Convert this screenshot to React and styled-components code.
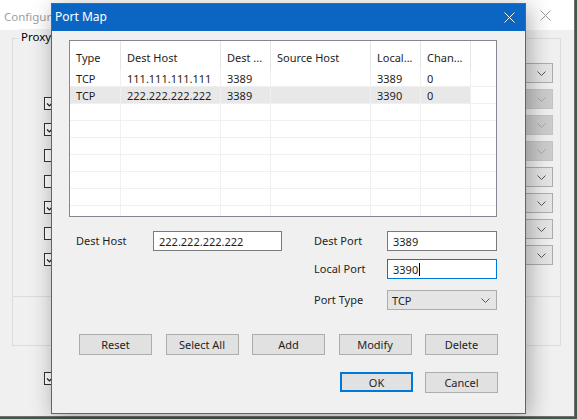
import React from 'react';
import styled, { createGlobalStyle } from 'styled-components';

const GlobalStyle = createGlobalStyle`
	html, body {
		margin: 0;
		padding: 0;
	}
	body {
		width: 577px;
		height: 419px;
		overflow: hidden;
		background: #3f5a4c;
		font-family: "Noto Sans", "Segoe UI", sans-serif;
		font-size: 11px;
		color: #000;
	}
	* {
		box-sizing: border-box;
	}
`;

const columns = [
	{ title: 'Type', width: 51 },
	{ title: 'Dest Host', width: 100 },
	{ title: 'Dest ...', width: 50 },
	{ title: 'Source Host', width: 100 },
	{ title: 'Local...', width: 50 },
	{ title: 'Chan...', width: 50 },
];

const rows = [
	['TCP', '111.111.111.111', '3389', '', '3389', '0'],
	['TCP', '222.222.222.222', '3389', '', '3390', '0'],
	[], [], [], [], [], [], [],
];

const ownerChecks = [true, true, false, false, true, false, true];
const ownerCombos = [false, true, true, true, false, false, false, false];

const Chevron = ({ color = '#555' }) => (
	<svg width="9" height="5" viewBox="0 0 9 5">
		<polyline points="0.5,0.5 4.5,4.5 8.5,0.5" fill="none" stroke={color} strokeWidth="1" />
	</svg>
);

const CloseGlyph = ({ color }) => (
	<svg width="11" height="11" viewBox="0 0 11 11">
		<path d="M0.5 0.5 L10.5 10.5 M10.5 0.5 L0.5 10.5" stroke={color} strokeWidth="1" />
	</svg>
);

const CheckMark = () => (
	<svg width="11" height="11" viewBox="0 0 11 11">
		<polyline points="2,5.5 4.5,8 9,3" fill="none" stroke="#222" strokeWidth="1.2" />
	</svg>
);

const App = () => {
	return (
		<>
			<GlobalStyle />
			<OwnerWindow>
				<OwnerTitleBar>
					<OwnerTitle>Configur</OwnerTitle>
					<OwnerClose>
						<CloseGlyph color="#9a9a9a" />
					</OwnerClose>
				</OwnerTitleBar>
				<OwnerBody>
					<GroupBox>
						<Legend>Proxy</Legend>
						<CheckColumn>
							{ownerChecks.map((c, i) => (
								<CheckBox key={i}>{c && <CheckMark />}</CheckBox>
							))}
						</CheckColumn>
						<ComboColumn>
							{ownerCombos.map((d, i) => (
								<OwnerCombo key={i} $disabled={d}>
									<Chevron color={d ? '#a8a8a8' : '#555'} />
								</OwnerCombo>
							))}
						</ComboColumn>
					</GroupBox>
					<LowerBox />
					<BottomCheck>
						<CheckBox>
							<CheckMark />
						</CheckBox>
					</BottomCheck>
				</OwnerBody>

				<Dialog>
					<TitleBar>
						<Title>Port Map</Title>
						<CloseButton>
							<CloseGlyph color="#fff" />
						</CloseButton>
					</TitleBar>
					<DialogBody>
						<ListView>
							<HeaderRow>
								{columns.map((c) => (
									<HeaderCell key={c.title} $w={c.width}>
										{c.title}
									</HeaderCell>
								))}
								<HeaderFill />
							</HeaderRow>
							{rows.map((r, i) => (
								<Row key={i}>
									<RowCells $selected={i === 1}>
										{columns.map((c, j) => (
											<Cell key={j} $w={c.width}>
												{r[j] || ''}
											</Cell>
										))}
									</RowCells>
									<RowFill />
								</Row>
							))}
						</ListView>

						<FormArea>
							<LeftField>
								<FieldLabel $w={77}>Dest Host</FieldLabel>
								<TextBox $w={129}>222.222.222.222</TextBox>
							</LeftField>
							<RightFields>
								<FieldLabel>Dest Port</FieldLabel>
								<TextBox>3389</TextBox>
								<FieldLabel>Local Port</FieldLabel>
								<TextBox $focused>
									3390
									<Caret />
								</TextBox>
								<FieldLabel>Port Type</FieldLabel>
								<Select>
									<span>TCP</span>
									<Chevron />
								</Select>
							</RightFields>
						</FormArea>

						<ActionRow>
							<Button>Reset</Button>
							<Button>Select All</Button>
							<Button>Add</Button>
							<Button>Modify</Button>
							<Button>Delete</Button>
						</ActionRow>

						<DialogButtons>
							<Button $default>OK</Button>
							<Button>Cancel</Button>
						</DialogButtons>
					</DialogBody>
				</Dialog>
			</OwnerWindow>
		</>
	);
};

export default App;

/* Styles --- */

const OwnerWindow = styled.div`
	position: relative;
	width: 575px;
	height: 417px;
	background: #f0f0f0;
	border-right: 1px solid #707070;
	border-bottom: 1px solid #707070;
	display: flex;
	flex-direction: column;
`;

const OwnerTitleBar = styled.div`
	height: 30px;
	background: #fff;
	display: flex;
	align-items: center;
	justify-content: space-between;
	padding-left: 4px;
`;

const OwnerTitle = styled.div`
	white-space: nowrap;
	font-size: 11.5px;
	color: #a0a0a0;
	margin-top: 3px;
`;

const OwnerClose = styled.div`
	width: 46px;
	height: 30px;
	margin-right: 6px;
	display: flex;
	align-items: center;
	justify-content: center;
`;

const OwnerBody = styled.div`
	flex: 1;
	padding: 8px 13px 0 12px;
	display: flex;
	flex-direction: column;
`;

const GroupBox = styled.div`
	position: relative;
	height: 259px;
	border: 1px solid #dcdcdc;
	display: flex;
	justify-content: space-between;
	padding: 0 7px 0 31px;
`;

const Legend = styled.span`
	position: absolute;
	left: 5px;
	top: -10px;
	padding: 0 3px;
	background: #f0f0f0;
	line-height: 16px;
	font-size: 11.5px;
`;

const CheckColumn = styled.div`
	display: flex;
	flex-direction: column;
	gap: 13px;
	padding-top: 58px;
`;

const CheckBox = styled.div`
	width: 13px;
	height: 13px;
	border: 1px solid #333;
	background: #fff;
	display: flex;
	align-items: center;
	justify-content: center;
`;

const ComboColumn = styled.div`
	display: flex;
	flex-direction: column;
	gap: 6px;
	padding-top: 24px;
`;

const OwnerCombo = styled.div`
	width: 120px;
	height: 20px;
	background: ${(p) => (p.$disabled ? '#cccccc' : '#e5e5e5')};
	border: 1px solid ${(p) => (p.$disabled ? '#c4c4c4' : '#adadad')};
	display: flex;
	align-items: center;
	justify-content: flex-end;
	padding-right: 6px;
`;

const LowerBox = styled.div`
	height: 50px;
	margin-top: -1px;
	border: 1px solid #dcdcdc;
`;

const BottomCheck = styled.div`
	margin-top: 26px;
	padding-left: 32px;
`;

const Dialog = styled.div`
	position: absolute;
	left: 51px;
	top: 3px;
	width: 475px;
	height: 411px;
	border: 1px solid #1c74c9;
	background: #f0f0f0;
	box-shadow: 3px 4px 22px rgba(0, 0, 0, 0.32);
	display: flex;
	flex-direction: column;
`;

const TitleBar = styled.div`
	height: 27px;
	background: #0b66c3;
	display: flex;
	align-items: center;
	justify-content: space-between;
	padding-left: 3px;
`;

const Title = styled.div`
	color: #fff;
	font-size: 12px;
	margin-top: -2px;
`;

const CloseButton = styled.div`
	width: 32px;
	height: 27px;
	display: flex;
	align-items: center;
	justify-content: center;
`;

const DialogBody = styled.div`
	flex: 1;
	padding: 9px 28px 0 17px;
	display: flex;
	flex-direction: column;
`;

const ListView = styled.div`
	width: 428px;
	height: 177px;
	border: 1px solid #828790;
	background: #fff;
	overflow: hidden;
`;

const HeaderRow = styled.div`
	display: flex;
	height: 29px;
`;

const HeaderCell = styled.div`
	width: ${(p) => p.$w}px;
	flex: none;
	border-right: 1px solid #e5e5e5;
	padding: 4px 0 0 6px;
	display: flex;
	align-items: center;
	white-space: nowrap;
	overflow: hidden;
	color: #1e1e1e;
`;

const HeaderFill = styled.div`
	flex: 1;
`;

const Row = styled.div`
	display: flex;
	height: 17px;
	border-bottom: 1px solid #f0f0f0;
`;

const RowCells = styled.div`
	display: flex;
	background: ${(p) => (p.$selected ? '#e8e8e8' : 'transparent')};
`;

const Cell = styled.div`
	width: ${(p) => p.$w}px;
	flex: none;
	border-right: 1px solid #f0f0f0;
	padding: 1px 0 0 6px;
	line-height: 15px;
	white-space: nowrap;
	overflow: hidden;
	color: #1e1e1e;
`;

const RowFill = styled.div`
	flex: 1;
`;

const FormArea = styled.div`
	display: flex;
	align-items: flex-start;
	margin-top: 14px;
	padding-left: 7px;
	gap: 32px;
`;

const LeftField = styled.div`
	display: flex;
	align-items: center;
`;

const RightFields = styled.div`
	display: grid;
	grid-template-columns: 73px 110px;
	grid-template-rows: 28px 31px 20px;
	align-items: start;
`;

const FieldLabel = styled.div`
	width: ${(p) => (p.$w ? `${p.$w}px` : 'auto')};
	line-height: 20px;
	color: #1e1e1e;
`;

const TextBox = styled.div`
	width: ${(p) => (p.$w ? `${p.$w}px` : '110px')};
	height: 20px;
	background: #fff;
	border: 1px solid ${(p) => (p.$focused ? '#0078d7' : '#7a7a7a')};
	padding-left: 5px;
	display: flex;
	align-items: center;
	color: #1e1e1e;
`;

const Caret = styled.span`
	display: inline-block;
	width: 1px;
	height: 13px;
	background: #000;
	margin-left: 1px;
`;

const Select = styled.div`
	width: 110px;
	height: 20px;
	background: #e5e5e5;
	border: 1px solid #acacac;
	padding: 0 6px 0 4px;
	display: flex;
	align-items: center;
	justify-content: space-between;
	color: #1e1e1e;
`;

const ActionRow = styled.div`
	display: flex;
	justify-content: space-between;
	margin: 24px -1px 0 10px;
`;

const Button = styled.div`
	width: 73px;
	height: ${(p) => (p.$default ? '20px' : '21px')};
	background: #e1e1e1;
	border: 1px solid ${(p) => (p.$default ? '#0078d7' : '#adadad')};
	box-shadow: ${(p) => (p.$default ? 'inset 0 0 0 1px #0078d7' : 'none')};
	display: flex;
	align-items: center;
	justify-content: center;
	color: #1e1e1e;
`;

const DialogButtons = styled.div`
	display: flex;
	justify-content: flex-end;
	gap: 12px;
	margin: 17px -1px 0 0;
`;
